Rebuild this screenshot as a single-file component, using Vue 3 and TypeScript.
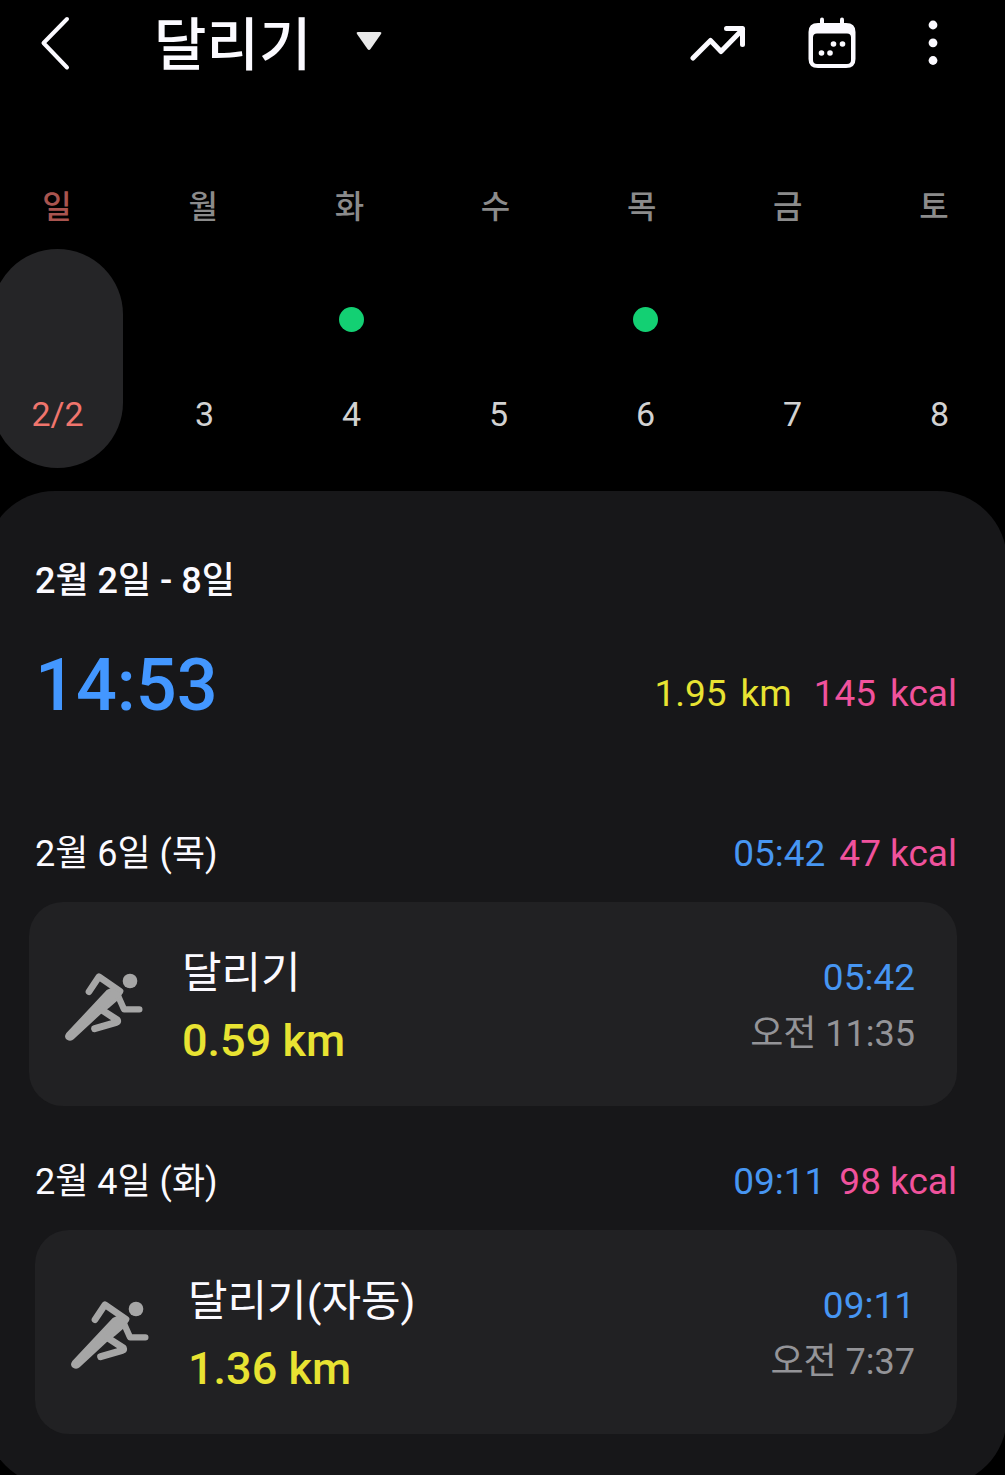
<script setup lang="ts">
interface Day {
  label: string
  date: string
  active: boolean
  selected: boolean
}

interface Workout {
  day: string
  duration: string
  calories: string
  name: string
  distance: string
  time: string
  wide: boolean
}

const days: Day[] = [
  { label: '일', date: '2/2', active: false, selected: true },
  { label: '월', date: '3', active: false, selected: false },
  { label: '화', date: '4', active: true, selected: false },
  { label: '수', date: '5', active: false, selected: false },
  { label: '목', date: '6', active: true, selected: false },
  { label: '금', date: '7', active: false, selected: false },
  { label: '토', date: '8', active: false, selected: false },
]

const workouts: Workout[] = [
  { day: '2월 6일 (목)', duration: '05:42', calories: '47 kcal', name: '달리기', distance: '0.59 km', time: '오전 11:35', wide: true },
  { day: '2월 4일 (화)', duration: '09:11', calories: '98 kcal', name: '달리기(자동)', distance: '1.36 km', time: '오전 7:37', wide: false },
]
</script>

<template>
  <div class="screen">
    <header class="bar">
      <button class="icon-btn" type="button" aria-label="뒤로">
        <svg width="32" height="56" viewBox="0 0 32 56" fill="none" stroke="#fbfaff" stroke-width="4" stroke-linecap="round" stroke-linejoin="round">
          <path d="M27 4L3.500 28L27 52.500" />
        </svg>
      </button>
      <button class="title" type="button" aria-haspopup="listbox">
        <span>달리기</span>
        <svg width="26" height="20" viewBox="0 0 26 20" fill="#e9e9e9">
          <path d="M2 1H24Q26 1 25 3L14.500 18Q13 20 11.500 18L1 3Q0 1 2 1Z" />
        </svg>
      </button>
      <nav class="actions">
        <button class="icon-btn" type="button" aria-label="추세">
          <svg width="56" height="40" viewBox="0 0 56 40" fill="none" stroke="#fbfaff" stroke-width="5" stroke-linecap="round" stroke-linejoin="round">
            <path d="M3 35L20.500 17.500L31 28.500L52.500 6.500M36.500 5.500H52.500V21.500" />
          </svg>
        </button>
        <button class="icon-btn" type="button" aria-label="달력">
          <svg width="48" height="52" viewBox="0 0 48 52" fill="#fbfaff">
            <path fill-rule="evenodd" d="M10 6H38Q47.500 6 47.500 15V42Q47.500 51 38 51H10Q0.500 51 0.500 42V15Q0.500 6 10 6ZM9 16.500Q5 16.500 5 20.500V43Q5 47 9 47H39Q43 47 43 43V20.500Q43 16.500 39 16.500Z" />
            <rect x="12" y="0.500" width="4" height="9" rx="2" />
            <rect x="32" y="0.500" width="4" height="9" rx="2" />
            <circle cx="25.500" cy="27" r="2.800" />
            <circle cx="34.500" cy="27" r="2.800" />
            <circle cx="13.500" cy="36" r="2.800" />
            <circle cx="22" cy="36" r="2.800" />
          </svg>
        </button>
        <button class="icon-btn" type="button" aria-label="더보기">
          <svg width="10" height="46" viewBox="0 0 10 46" fill="#fbfaff">
            <circle cx="5" cy="5" r="4.400" />
            <circle cx="5" cy="22.800" r="4.400" />
            <circle cx="5" cy="40.500" r="4.400" />
          </svg>
        </button>
      </nav>
    </header>

    <div class="weekdays">
      <span v-for="d in days" :key="d.label" :class="{ sunday: d.selected }">{{ d.label }}</span>
    </div>
    <div class="dates">
      <button v-for="d in days" :key="d.date" type="button" class="date" :class="{ selected: d.selected }">
        <i class="dot" :class="{ on: d.active }"></i>
        <span>{{ d.date }}</span>
      </button>
    </div>

    <main class="panel">
      <h2>2월 2일 - 8일</h2>
      <div class="summary">
        <strong>14:53</strong>
        <p class="totals">
          <span class="metric yellow"><span>1.95</span><span>km</span></span>
          <span class="metric pink"><span>145</span><span>kcal</span></span>
        </p>
      </div>

      <section v-for="w in workouts" :key="w.day" class="entry">
        <div class="entry-head">
          <h3>{{ w.day }}</h3>
          <p><span class="blue">{{ w.duration }}</span><span class="pink">{{ w.calories }}</span></p>
        </div>
        <article class="card" :class="{ wide: w.wide }">
          <svg class="runner" width="80" height="72" viewBox="40 64 240 216" fill="#a6a6a6" stroke="#a6a6a6" stroke-linecap="round" stroke-linejoin="round">
            <circle cx="238" cy="94" r="22" stroke="none" />
            <path d="M115 126L145 81L208 125" fill="none" stroke-width="20" />
            <path d="M202 138L220 179H266" fill="none" stroke-width="19" />
            <path d="M190 116L171 124L50 253Q44 262 51 267Q60 272 67 265L148 190L172 172L204 144L213 126Z" stroke-width="8" />
            <path d="M152 180L200 211Q202 216 197 218L132 237" fill="none" stroke-width="21" />
          </svg>
          <div class="what">
            <h4>{{ w.name }}</h4>
            <p class="yellow">{{ w.distance }}</p>
          </div>
          <div class="when">
            <p class="blue">{{ w.duration }}</p>
            <p class="muted">{{ w.time }}</p>
          </div>
        </article>
      </section>
    </main>
  </div>
</template>

<style>
html,
body {
  margin: 0;
  background: #000;
}
</style>

<style scoped>
.screen {
  height: 100vh;
  overflow-x: hidden;
  overflow-y: auto;
  scrollbar-width: none;
  background: #000;
  color: #fbfaff;
  font-family: Roboto, "Noto Sans CJK KR", sans-serif;
  font-size: 37px;
}
h2, h3, h4, p {
  margin: 0;
  font-weight: 400;
  font-size: inherit;
}
button {
  border: 0;
  padding: 0;
  background: none;
  color: inherit;
  font: inherit;
}
svg {
  display: block;
}
.bar {
  display: flex;
  align-items: center;
  height: 86px;
  padding: 0 67px 0 40px;
}
.title {
  display: flex;
  align-items: center;
  gap: 45px;
  margin-left: 82px;
  font-size: 57px;
  font-weight: 500;
  line-height: 80px;
}
.title span {
  padding-top: 6px;
}
.title svg {
  margin-bottom: 4px;
}
.actions {
  display: flex;
  align-items: center;
  gap: 62px;
  margin-left: auto;
}
.actions .icon-btn:last-child {
  margin-left: 10px;
}
.weekdays,
.dates {
  display: grid;
  grid-template-columns: repeat(7, 1fr);
  text-align: center;
}
.weekdays {
  margin: 95px -2px 0 -16px;
  font-size: 32px;
  line-height: 52px;
  color: #8b8b8b;
  font-weight: 500;
}
.sunday {
  color: #a9544f;
}
.dates {
  margin: 16px -8px 0 -16px;
  justify-items: center;
  font-size: 34px;
  color: #d2d2d2;
}
.date {
  display: flex;
  flex-direction: column;
  align-items: center;
  justify-content: space-between;
  width: 131px;
  height: 219px;
  padding: 58px 0 34px;
  box-sizing: border-box;
  border-radius: 66px;
  line-height: 40px;
}
.date.selected {
  background: #252527;
  color: #f0756d;
}
.dot {
  width: 25px;
  height: 25px;
  border-radius: 50%;
}
.dot.on {
  background: #13d073;
}
.panel {
  margin: 23px -2px 0 -15px;
  padding: 62px 50px 52px;
  border-radius: 70px;
  background: #171719;
}
h2,
h3,
.muted {
  font-size: 36px;
}
h2 {
  font-weight: 500;
  line-height: 56px;
}
.summary {
  display: flex;
  justify-content: space-between;
  align-items: center;
  padding-top: 33px;
}
.summary strong {
  font-size: 72px;
  font-weight: 500;
  line-height: 88px;
  color: #4397ff;
}
.totals {
  display: flex;
  gap: 22px;
  padding-top: 14px;
}
.metric {
  display: flex;
  gap: 14px;
}
.blue { color: #4796f2; }
.pink { color: #f0529c; }
.yellow { color: #e8e332; }
.muted { color: #949498; }
.entry {
  padding-top: 48px;
}
.summary + .entry {
  padding-top: 96px;
}
.entry-head {
  display: flex;
  justify-content: space-between;
  align-items: center;
  line-height: 56px;
  padding-bottom: 20px;
}
.entry-head p {
  display: flex;
  gap: 14px;
}
.card {
  display: flex;
  align-items: center;
  height: 204px;
  box-sizing: border-box;
  padding: 0 42px 0 35px;
  border-radius: 34px;
  background: #212123;
}
.card.wide {
  margin-left: -6px;
}
.runner {
  margin-top: 6px;
}
.what {
  margin-left: 38px;
  padding-top: 6px;
}
.what h4 {
  font-size: 43px;
  line-height: 68px;
}
.what p {
  font-size: 45px;
  font-weight: 500;
  line-height: 68px;
}
.when {
  margin-left: auto;
  padding-top: 4px;
  text-align: right;
  line-height: 57px;
}
</style>
